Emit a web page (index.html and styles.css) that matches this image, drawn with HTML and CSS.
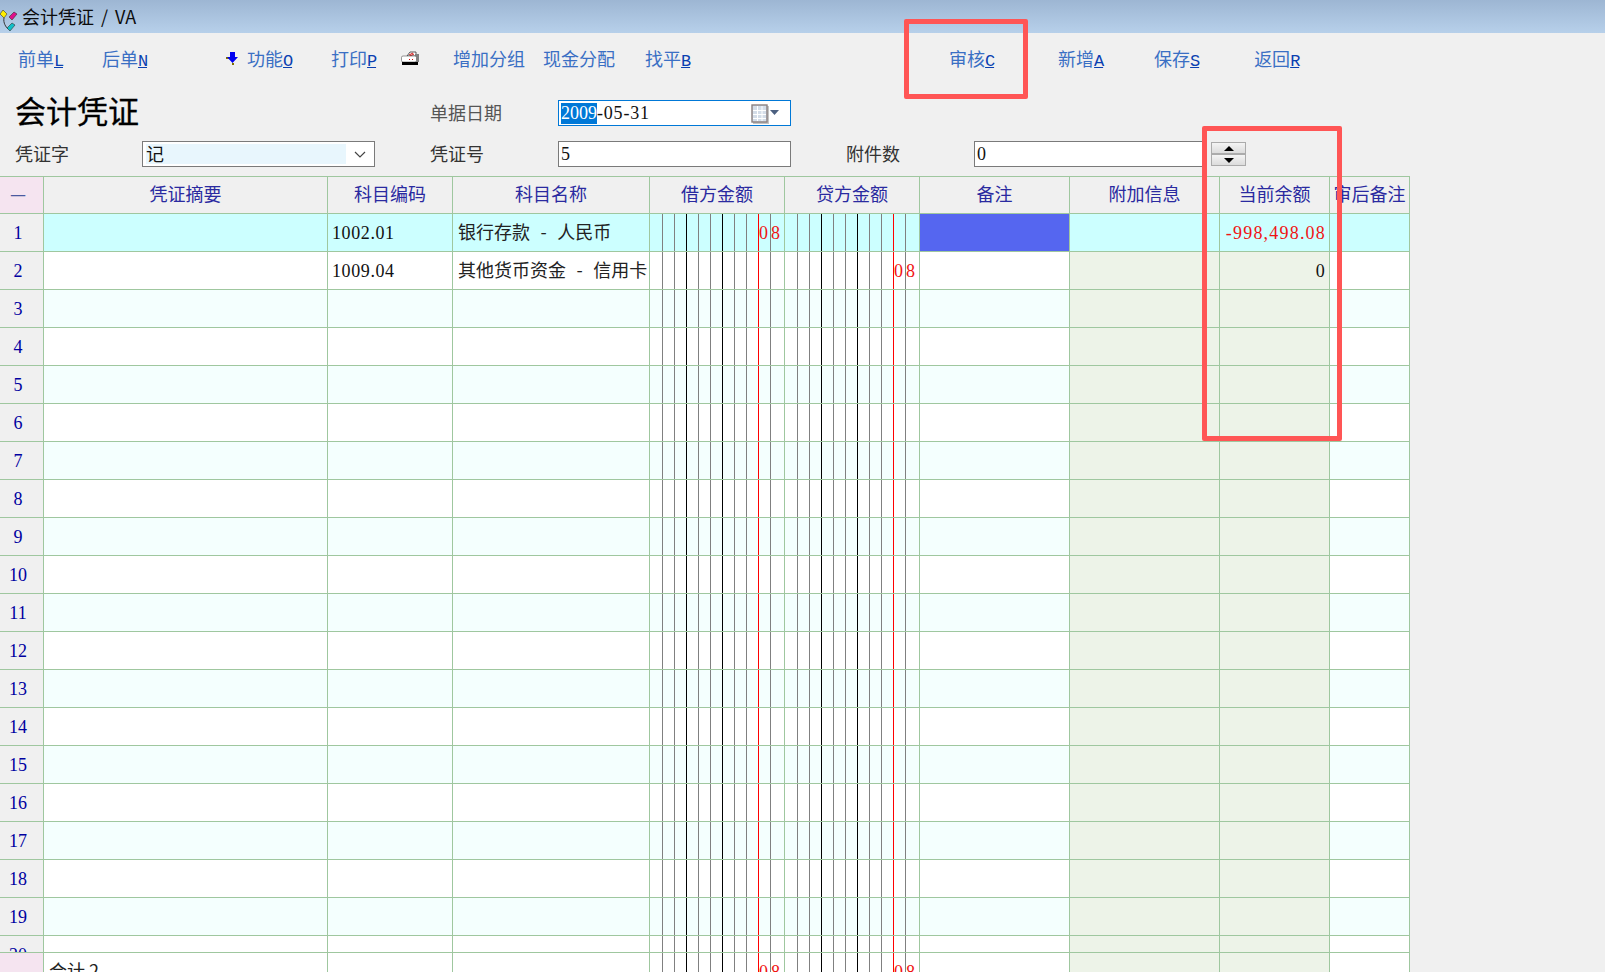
FILE: index.html
```html
<!DOCTYPE html>
<html lang="zh-CN">
<head>
    <meta charset="UTF-8">
    <title>会计凭证 / VA</title>
    <link rel="stylesheet" href="styles.css">
</head>
<body>
    <div class="titlebar">
        <svg class="app-icon" width="20" height="28" viewBox="0 0 20 28">
            <path d="M4 13 C3 18 6 22 8 24" fill="none" stroke="#333" stroke-width="1"/>
            <path d="M0 9 L3 5 L7 9 L4 13 Z" fill="#ffee00" stroke="#333" stroke-width=".6"/>
            <path d="M9 12 L14 7 L17 9 L12 15 Z" fill="#e0108c" stroke="#333" stroke-width=".6"/>
            <path d="M7 23 L12 18 L15 20 L10 26 Z" fill="#10c0c8" stroke="#333" stroke-width=".6"/>
        </svg>
        <span>会计凭证 / VA</span>
    </div>

    <div class="toolbar">
        <a class="tool">前单<u>L</u></a>
        <a class="tool ml-39">后单<u>N</u></a>
        <svg class="tool-icon ml-79" width="13" height="13" viewBox="0 0 13 13">
            <rect x="0" y="5" width="3" height="2" fill="#807000"/>
            <path d="M4 0 H9 V5 H12 L6.5 11 L1 5 H4 Z" fill="#0000f0"/>
            <rect x="6" y="11" width="2" height="2" fill="#807000"/>
        </svg>
        <a class="tool ml-8">功能<u>O</u></a>
        <a class="tool ml-39">打印<u>P</u></a>
        <svg class="tool-icon ml-25" width="19" height="15" viewBox="0 0 19 15">
            <path d="M6 5 L9 1 H15 V5 Z" fill="#fff" stroke="#333" stroke-width=".8"/>
            <path d="M8 4 L12 2 M9 5 L13 3" stroke="#d01010" stroke-width="1"/>
            <rect x="14" y="3" width="4" height="8" fill="#808080"/>
            <rect x="0.5" y="5" width="15" height="6" rx="1.5" fill="#fff" stroke="#555" stroke-width=".6"/>
            <rect x="8" y="8" width="1" height="1" fill="#d01010"/>
            <rect x="11" y="8" width="1" height="1" fill="#d01010"/>
            <rect x="1" y="11" width="16" height="3" fill="#000"/>
        </svg>
        <a class="tool ml-33">增加分组</a>
        <a class="tool ml-18">现金分配</a>
        <a class="tool ml-30">找平<u>B</u></a>
        <a class="tool ml-259">审核<u>C</u></a>
        <a class="tool ml-64">新增<u>A</u></a>
        <a class="tool ml-51">保存<u>S</u></a>
        <a class="tool ml-55">返回<u>R</u></a>
    </div>

    <div class="form-row form-row-first">
        <h1 class="page-title">会计凭证</h1>
        <label class="field-label label-date">单据日期</label>
        <div class="input input-date">
            <span class="selected">2009</span><span class="date-rest">-05-31</span>
            <svg class="calendar" width="29" height="20" viewBox="0 0 29 20">
                <rect x="2" y="2" width="16" height="18" fill="#c4c4c4"/>
                <rect x="1" y="1" width="15" height="17" fill="#d4dde8" stroke="#8a8080" stroke-width="1.4"/>
                <path d="M2 6.5 H15 M2 10.5 H15 M2 14.5 H15 M6.5 2 V17 M11 2 V17" stroke="#fff" stroke-width="1"/>
                <path d="M19 6 H28 L23.5 11 Z" fill="#4c6080"/>
            </svg>
        </div>
    </div>

    <div class="form-row form-row-second">
        <label class="field-label label-word">凭证字</label>
        <div class="input input-select">
            <span class="select-value">记</span>
            <svg width="12" height="7" viewBox="0 0 12 7" class="chevron">
                <path d="M1 1 L6 6 L11 1" fill="none" stroke="#444" stroke-width="1.2"/>
            </svg>
        </div>
        <label class="field-label label-no">凭证号</label>
        <div class="input input-no">5</div>
        <label class="field-label label-attach">附件数</label>
        <div class="input input-attach">0</div>
        <div class="spinner">
            <button class="spin-btn"><span class="arrow-up"></span></button>
            <button class="spin-btn"><span class="arrow-down"></span></button>
        </div>
    </div>

    <table class="voucher">
        <colgroup>
            <col class="c-no"><col class="c-memo"><col class="c-code"><col class="c-name">
            <col class="c-money"><col class="c-money">
            <col class="c-note"><col class="c-note"><col class="c-balance"><col class="c-audit">
        </colgroup>
        <thead>
            <tr>
                <th class="corner">—</th>
                <th>凭证摘要</th>
                <th>科目编码</th>
                <th>科目名称</th>
                <th>借方金额</th>
                <th>贷方金额</th>
                <th>备注</th>
                <th>附加信息</th>
                <th>当前余额</th>
                <th>审后备注</th>
            </tr>
        </thead>
        <tbody>
            <tr class="current">
                <td class="no">1</td><td></td><td class="num">1002.01</td><td class="name">银行存款 - 人民币</td>
                <td class="money"><span class="digits">08</span></td><td class="money"></td>
                <td class="picked"></td><td></td><td class="balance neg">-998,498.08</td><td></td>
            </tr>
            <tr>
                <td class="no">2</td><td></td><td class="num">1009.04</td><td class="name">其他货币资金 - 信用卡</td>
                <td class="money"></td><td class="money"><span class="digits">08</span></td>
                <td></td><td class="ro"></td><td class="ro balance">0</td><td></td>
            </tr>
            <tr><td class="no">3</td><td></td><td></td><td></td><td class="money"></td><td class="money"></td><td></td><td class="ro"></td><td class="ro"></td><td></td></tr>
            <tr><td class="no">4</td><td></td><td></td><td></td><td class="money"></td><td class="money"></td><td></td><td class="ro"></td><td class="ro"></td><td></td></tr>
            <tr><td class="no">5</td><td></td><td></td><td></td><td class="money"></td><td class="money"></td><td></td><td class="ro"></td><td class="ro"></td><td></td></tr>
            <tr><td class="no">6</td><td></td><td></td><td></td><td class="money"></td><td class="money"></td><td></td><td class="ro"></td><td class="ro"></td><td></td></tr>
            <tr><td class="no">7</td><td></td><td></td><td></td><td class="money"></td><td class="money"></td><td></td><td class="ro"></td><td class="ro"></td><td></td></tr>
            <tr><td class="no">8</td><td></td><td></td><td></td><td class="money"></td><td class="money"></td><td></td><td class="ro"></td><td class="ro"></td><td></td></tr>
            <tr><td class="no">9</td><td></td><td></td><td></td><td class="money"></td><td class="money"></td><td></td><td class="ro"></td><td class="ro"></td><td></td></tr>
            <tr><td class="no">10</td><td></td><td></td><td></td><td class="money"></td><td class="money"></td><td></td><td class="ro"></td><td class="ro"></td><td></td></tr>
            <tr><td class="no">11</td><td></td><td></td><td></td><td class="money"></td><td class="money"></td><td></td><td class="ro"></td><td class="ro"></td><td></td></tr>
            <tr><td class="no">12</td><td></td><td></td><td></td><td class="money"></td><td class="money"></td><td></td><td class="ro"></td><td class="ro"></td><td></td></tr>
            <tr><td class="no">13</td><td></td><td></td><td></td><td class="money"></td><td class="money"></td><td></td><td class="ro"></td><td class="ro"></td><td></td></tr>
            <tr><td class="no">14</td><td></td><td></td><td></td><td class="money"></td><td class="money"></td><td></td><td class="ro"></td><td class="ro"></td><td></td></tr>
            <tr><td class="no">15</td><td></td><td></td><td></td><td class="money"></td><td class="money"></td><td></td><td class="ro"></td><td class="ro"></td><td></td></tr>
            <tr><td class="no">16</td><td></td><td></td><td></td><td class="money"></td><td class="money"></td><td></td><td class="ro"></td><td class="ro"></td><td></td></tr>
            <tr><td class="no">17</td><td></td><td></td><td></td><td class="money"></td><td class="money"></td><td></td><td class="ro"></td><td class="ro"></td><td></td></tr>
            <tr><td class="no">18</td><td></td><td></td><td></td><td class="money"></td><td class="money"></td><td></td><td class="ro"></td><td class="ro"></td><td></td></tr>
            <tr><td class="no">19</td><td></td><td></td><td></td><td class="money"></td><td class="money"></td><td></td><td class="ro"></td><td class="ro"></td><td></td></tr>
            <tr class="cut">
                <td class="no"><div class="clip">20</div></td><td></td><td></td><td></td><td class="money"></td><td class="money"></td><td></td><td class="ro"></td><td class="ro"></td><td></td>
            </tr>
        </tbody>
        <tfoot>
            <tr>
                <td class="corner"></td>
                <td class="sum">合计 2</td>
                <td></td><td></td>
                <td class="money"><span class="digits">08</span></td>
                <td class="money"><span class="digits">08</span></td>
                <td></td><td class="ro"></td><td class="ro"></td><td></td>
            </tr>
        </tfoot>
    </table>

    <!-- 截图上的红框标注 -->
    <div class="mark mark-audit"></div>
    <div class="mark mark-balance"></div>
</body>
</html>
```

FILE: styles.css
```css
* {
    box-sizing: border-box;
    margin: 0;
    padding: 0;
}

html, body {
    height: 972px;
    overflow: hidden;
}

body {
    position: relative;
    background: #f0f0f0;
    color: #222;
    font-family: "Noto Sans CJK SC", "Liberation Serif", sans-serif;
    font-size: 18px;
}

/* 标题栏 */
.titlebar {
    display: flex;
    align-items: center;
    height: 33px;
    padding-bottom: 2px;
    background: linear-gradient(#9db6d3, #b7d0ea);
    color: #0c0c0c;
}

.app-icon {
    flex: none;
    margin-top: 6px;
    margin-right: 2px;
}

.titlebar span {
    word-spacing: 3px;
}

/* 工具栏 */
.toolbar {
    display: flex;
    align-items: center;
    height: 54px;
    padding-left: 18px;
    padding-bottom: 4px;
}

.tool {
    color: #3a6fc4;
    white-space: nowrap;
}

.tool u {
    color: #0a3fb0;
    font-family: "Liberation Mono", monospace;
    font-size: 17px;
    letter-spacing: -1.2px;
}

.tool-icon {
    flex: none;
}

.ml-8 { margin-left: 8px; }
.ml-18 { margin-left: 18px; }
.ml-25 { margin-left: 25px; }
.ml-30 { margin-left: 30px; }
.ml-33 { margin-left: 33px; }
.ml-39 { margin-left: 39px; }
.ml-51 { margin-left: 51px; }
.ml-55 { margin-left: 55px; }
.ml-64 { margin-left: 64px; }
.ml-79 { margin-left: 79px; }
.ml-259 { margin-left: 259px; }

/* 表单 */
.form-row {
    display: flex;
    align-items: center;
    height: 26px;
    padding-left: 15px;
}

.form-row-first {
    margin-top: 13px;
    margin-bottom: 15px;
}

.form-row-second {
    margin-bottom: 9px;
}

.page-title {
    width: 415px;
    margin-bottom: 6px;
    color: #000;
    font-size: 31px;
    font-weight: 400;
    line-height: 26px;
    -webkit-text-stroke: .3px #000;
}

.field-label {
    margin-bottom: 3px;
    color: #333;
    white-space: nowrap;
}

.label-date { width: 128px; color: #555; }
.label-word { width: 127px; }
.label-no { width: 128px; margin-left: 55px; }
.label-attach { width: 128px; margin-left: 55px; }

.input {
    display: flex;
    align-items: center;
    height: 26px;
    border: 1px solid #7a7a7a;
    background: #fff;
    color: #111;
    font-family: "Liberation Serif", serif;
    padding-left: 2px;
}

.input-date {
    position: relative;
    width: 233px;
    border: 1px solid #0078d7;
}

.selected {
    background: #0078d7;
    color: #fff;
}

.date-rest {
    letter-spacing: .8px;
}

.calendar {
    position: absolute;
    top: 3px;
    right: 10px;
}

.input-select {
    justify-content: space-between;
    width: 233px;
    padding: 2px 8px 2px 3px;
}

.select-value {
    width: 200px;
    height: 100%;
    background: #e8f6fd;
    font-family: "Noto Sans CJK SC", sans-serif;
    line-height: 18px;
}

.input-no {
    width: 233px;
}

.input-attach {
    width: 233px;
}

.spinner {
    display: flex;
    flex-direction: column;
    width: 35px;
    height: 24px;
    margin-left: 4px;
}

.spin-btn {
    display: flex;
    align-items: center;
    justify-content: center;
    height: 12px;
    border: 1px solid #ababab;
    background: linear-gradient(#f4f4f4, #dcdcdc);
}

.arrow-up {
    border-left: 5px solid transparent;
    border-right: 5px solid transparent;
    border-bottom: 5px solid #000;
}

.arrow-down {
    border-left: 5px solid transparent;
    border-right: 5px solid transparent;
    border-top: 5px solid #000;
}

/* 凭证表格 */
.voucher {
    table-layout: fixed;
    width: 1410px;
    border-collapse: separate;
    border-spacing: 0;
    border-top: 1px solid #9fc79f;
}

.c-no { width: 44px; }
.c-memo { width: 284px; }
.c-code { width: 125px; }
.c-name { width: 197px; }
.c-money { width: 135px; }
.c-note { width: 150px; }
.c-balance { width: 110px; }
.c-audit { width: 80px; }

.voucher th,
.voucher td {
    height: 38px;
    border-right: 1px solid #9fc79f;
    border-bottom: 1px solid #9fc79f;
    font-weight: 400;
    white-space: nowrap;
    overflow: hidden;
}

.voucher th {
    height: 37px;
    padding-bottom: 4px;
    background: #f0f0f0;
    color: #2a2aa0;
}

.voucher th.corner,
.voucher td.corner {
    background: #f5e4f0;
    color: #4a5aa0;
    padding-right: 7px;
}

.voucher tbody tr:nth-child(odd) td {
    background-color: #f4fffe;
}

.voucher tbody tr:nth-child(even) td {
    background-color: #fff;
}

.voucher tfoot td {
    background-color: #fff;
}

.voucher tbody tr.current td {
    background-color: #ccffff;
}

.voucher tbody tr td.no {
    padding-top: 1px;
    padding-right: 7px;
    background-color: #f0f0f0;
    color: #0000a0;
    font-family: "Liberation Serif", serif;
    text-align: center;
}

.voucher tbody tr.cut td.no {
    padding-top: 0;
}

.voucher tbody tr td.picked {
    background-color: #5566f0;
}

.voucher tbody tr td.ro,
.voucher tfoot td.ro {
    background-color: #edf3e8;
}

.voucher td.num {
    padding-top: 1px;
    padding-left: 4px;
    color: #111;
    font-family: "Liberation Serif", serif;
    letter-spacing: .6px;
}

.voucher td.name {
    padding-left: 5px;
    padding-bottom: 4px;
    color: #222;
    word-spacing: 6.5px;
}

.voucher td.balance {
    padding-top: 1px;
    padding-right: 3px;
    color: #111;
    font-family: "Liberation Serif", serif;
    letter-spacing: 1.2px;
    text-align: right;
}

.voucher td.neg {
    color: #f01414;
}

.voucher td.sum {
    padding-left: 5px;
    padding-bottom: 4px;
    color: #222;
}

/* 金额列的数位竖线 */
.voucher td.money {
    padding-right: 1px;
    text-align: right;
    background-image:
        linear-gradient(#f00, #f00),
        linear-gradient(#000, #000),
        linear-gradient(#000, #000),
        repeating-linear-gradient(to right, transparent 0 11px, #808080 11px 12px);
    background-size: 1px 100%, 1px 100%, 1px 100%, 120px 100%;
    background-position: 108px 0, 36px 0, 72px 0, 1px 0;
    background-repeat: no-repeat;
}

.digits {
    display: block;
    color: #f01414;
    font-family: "Liberation Serif", serif;
    font-size: 18px;
    line-height: 18px;
    letter-spacing: 3px;
}

.voucher tr.cut td {
    height: 17px;
}

.clip {
    height: 16px;
    line-height: 38px;
    overflow: hidden;
}

/* 红框 */
.mark {
    position: absolute;
    border: 5px solid #ff5555;
    border-radius: 2px;
}

.mark-audit {
    left: 904px;
    top: 19px;
    width: 124px;
    height: 80px;
}

.mark-balance {
    left: 1202px;
    top: 126px;
    width: 140px;
    height: 315px;
}
```
